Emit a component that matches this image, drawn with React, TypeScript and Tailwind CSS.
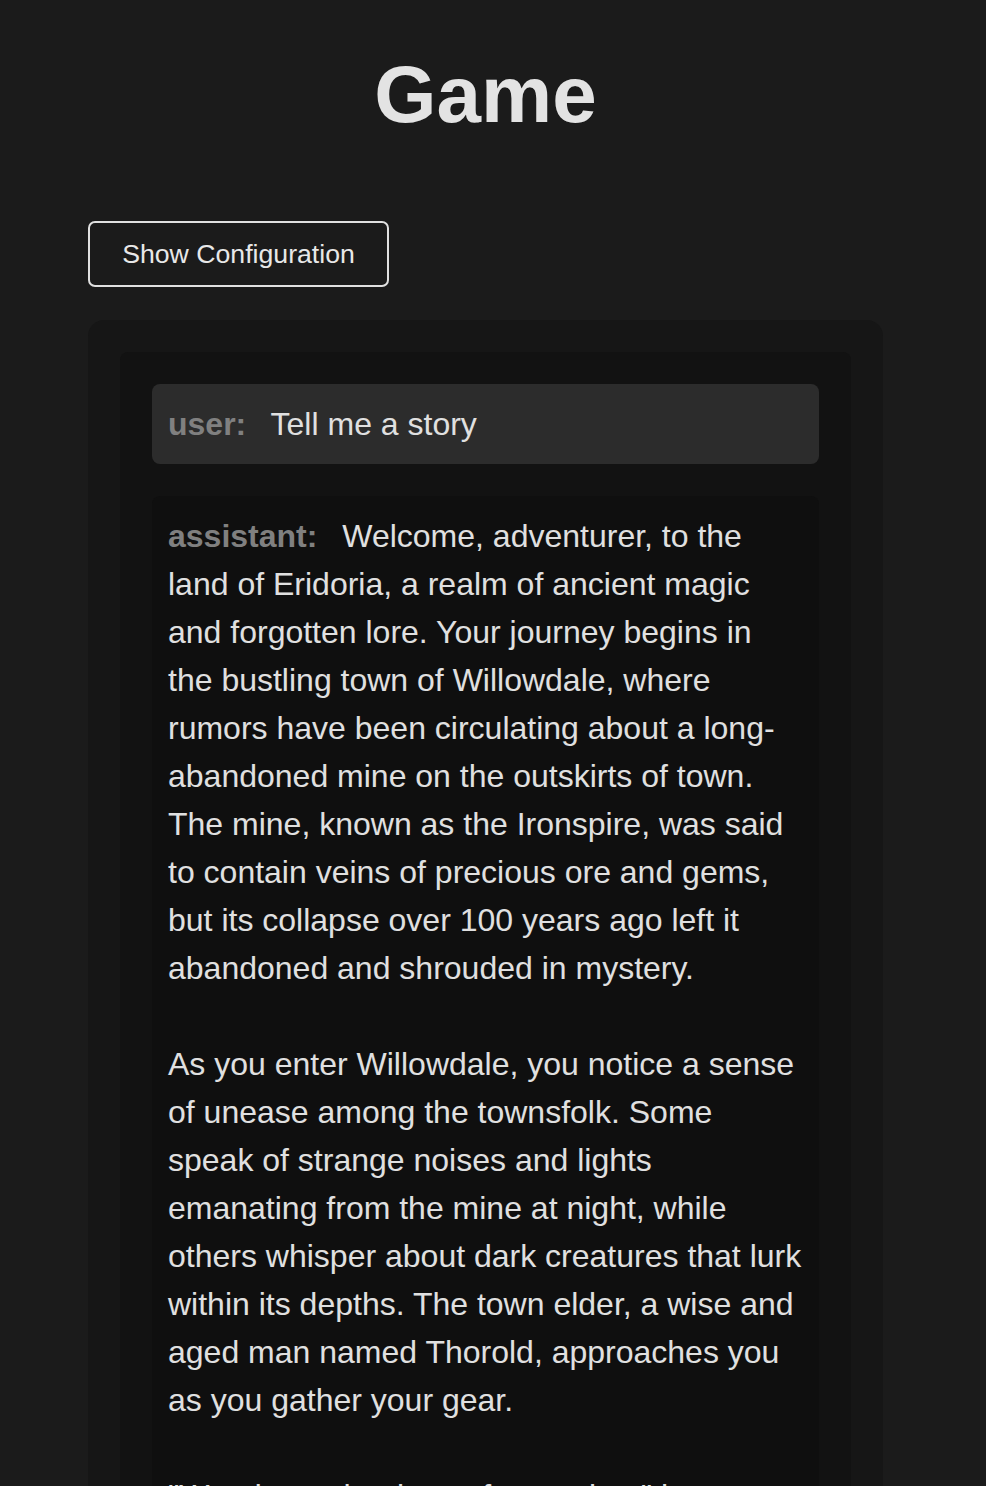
import React from 'react';

interface Message {
  role: 'user' | 'assistant';
  content: string;
}

const messages: Message[] = [
  { role: 'user', content: 'Tell me a story' },
  {
    role: 'assistant',
    content:
      'Welcome, adventurer, to the land of Eridoria, a realm of ancient magic and forgotten lore. Your journey begins in the bustling town of Willowdale, where rumors have been circulating about a long-abandoned mine on the outskirts of town. The mine, known as the Ironspire, was said to contain veins of precious ore and gems, but its collapse over 100 years ago left it abandoned and shrouded in mystery.\n\nAs you enter Willowdale, you notice a sense of unease among the townsfolk. Some speak of strange noises and lights emanating from the mine at night, while others whisper about dark creatures that lurk within its depths. The town elder, a wise and aged man named Thorold, approaches you as you gather your gear.\n\n"Wanderer, thank you for coming," he says, his voice heavy with worry. "The mine has woken, and we fear what lies below."',
  },
];

const ChatMessage: React.FC<{ message: Message }> = ({ message }) => {
  const isUser = message.role === 'user';
  return (
    <div
      className={`rounded-[8px] p-[16px] text-[32px] leading-[48px] text-[#e0e0e0] whitespace-pre-wrap ${
        isUser ? 'bg-[#2c2c2c]' : 'bg-[#0f0f0f]'
      }`}
    >
      <span className="font-bold text-[#808080] mr-[16px]">{message.role}:</span> {message.content}
    </div>
  );
};

export default function App() {
  return (
    <div
      className="min-h-screen bg-[#1b1b1b] text-[#e0e0e0]"
      style={{ fontFamily: '"Liberation Sans", Arial, sans-serif' }}
    >
      <div className="ml-[88px] w-[795px] pt-[49px]">
        <h1 className="text-center text-[80px] leading-[92px] font-bold text-[#e3e3e3]">Game</h1>

        <button className="mt-[80px] flex h-[66px] w-[301px] items-center justify-center rounded-[7px] border-2 border-[#e0e0e0] bg-transparent text-[26.67px] text-[#e8e8e8]">
          Show Configuration
        </button>

        <div className="mt-[33px] rounded-[16px] bg-[#161616] p-[32px]">
          <div className="rounded-[8px] bg-[#121212] p-[32px]">
            <div className="flex flex-col gap-[32px]">
              {messages.map((m, i) => (
                <ChatMessage key={i} message={m} />
              ))}
            </div>
          </div>
        </div>
      </div>
    </div>
  );
}
